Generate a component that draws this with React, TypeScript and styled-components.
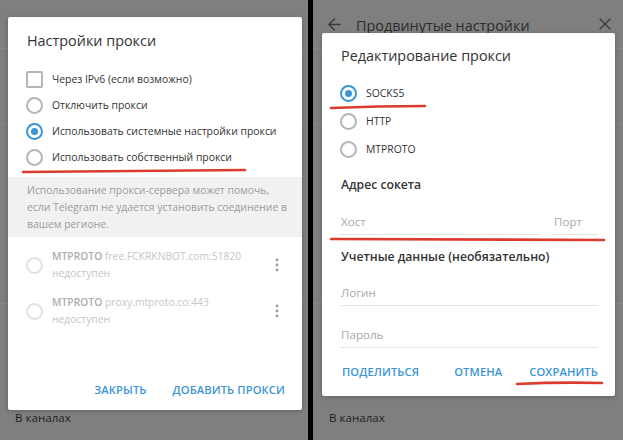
import React from 'react';
import styled, { createGlobalStyle } from 'styled-components';
import { ArrowLeft, X } from 'lucide-react';

const GlobalStyle = createGlobalStyle`
  html, body {
    margin: 0;
    padding: 0;
    background: #000;
  }
  body {
    font-family: "Open Sans", "Noto Sans", sans-serif;
  }
`;

const blue = '#3a95d6';
const red = '#dc3a2f';

const Screen = styled.div`
  display: flex;
  width: 623px;
  height: 440px;
  overflow: hidden;
  background: #000;
`;

const Pane = styled.div<{ $width: number }>`
  position: relative;
  display: flex;
  flex-direction: column;
  width: ${p => p.$width}px;
  height: 100%;
  background: #7f7f7f;
  overflow: hidden;
`;

const Separator = styled.div`
  width: 5px;
  flex-shrink: 0;
  background: #000;
`;

const BackdropSection = styled.div<{ $height: number }>`
  display: flex;
  align-items: center;
  gap: 12px;
  height: ${p => p.$height}px;
  flex-shrink: 0;
  padding: 0 8px 0 12px;
  border-bottom: 1px solid #868686;
  color: #2d2d2d;
  font-size: 14.4px;
`;

const HeaderTitle = styled.div`
  flex: 1;
  padding-top: 2px;
`;

const BackdropLabel = styled.div<{ $left: number }>`
  margin-top: auto;
  padding: 0 0 12px ${p => p.$left}px;
  font-size: 11.6px;
  line-height: 20px;
  color: #1f1f1f;
`;

const Dialog = styled.div<{ $top: number; $left: number; $width: number; $height: number }>`
  position: absolute;
  top: ${p => p.$top}px;
  left: ${p => p.$left}px;
  width: ${p => p.$width}px;
  height: ${p => p.$height}px;
  display: flex;
  flex-direction: column;
  background: #fff;
  border-radius: 2px;
  box-shadow: 0 1px 4px rgba(0, 0, 0, 0.25);
`;

const DialogTitle = styled.div<{ $top: number }>`
  padding: ${p => p.$top}px 18px 0 19px;
  font-size: 14.4px;
  line-height: 20px;
  color: #333;
`;

const OptionList = styled.div<{ $top: number }>`
  display: flex;
  flex-direction: column;
  margin-top: ${p => p.$top}px;
`;

const OptionRow = styled.div<{ $height: number }>`
  display: flex;
  align-items: center;
  gap: 9px;
  height: ${p => p.$height}px;
  padding-left: 18px;
  font-size: 10.4px;
  color: #333;
  white-space: nowrap;
`;

const Radio = styled.span<{ $checked?: boolean; $faded?: boolean }>`
  position: relative;
  width: 17px;
  height: 17px;
  box-sizing: border-box;
  flex-shrink: 0;
  border-radius: 50%;
  border: 2px solid ${p => (p.$checked ? blue : p.$faded ? '#e2e2e2' : '#b5b5b5')};

  &::after {
    content: '';
    display: ${p => (p.$checked ? 'block' : 'none')};
    position: absolute;
    inset: 3px;
    border-radius: 50%;
    background: ${blue};
  }
`;

const Checkbox = styled.span`
  width: 17px;
  height: 17px;
  box-sizing: border-box;
  flex-shrink: 0;
  border-radius: 2px;
  border: 2px solid #b5b5b5;
`;

const InfoBox = styled.div`
  margin-top: 7px;
  padding: 5px 12px 4px 19px;
  background: #f1f1f1;
  font-size: 10.4px;
  line-height: 17px;
  color: #9c9c9c;
  white-space: nowrap;
`;

const ProxyItem = styled.div`
  display: flex;
  align-items: center;
  gap: 9px;
  height: 46px;
  padding: 0 22px 0 18px;
  &:first-child {
    margin-top: 5px;
  }
`;

const ProxyText = styled.div`
  flex: 1;
  font-size: 10.3px;
  line-height: 17px;
  color: #c6c6c6;
  white-space: nowrap;
`;

const ProxyType = styled.span`
  font-weight: 600;
  color: #adadad;
`;

const Spacer = styled.div`
  flex: 1;
`;

const ButtonRow = styled.div<{ $split?: boolean; $bottom: number }>`
  display: flex;
  justify-content: ${p => (p.$split ? 'space-between' : 'flex-end')};
  gap: 26px;
  padding: 0 17px ${p => p.$bottom}px 20px;
`;

const ButtonGroup = styled.div`
  display: flex;
  gap: 27px;
`;

const TextButton = styled.span`
  font-size: 11.2px;
  line-height: 16px;
  font-weight: 600;
  color: ${blue};
  text-transform: uppercase;
  letter-spacing: 0.1px;
`;

const SectionHeading = styled.div<{ $top: number }>`
  margin-top: ${p => p.$top}px;
  padding-left: 19px;
  font-size: 12.2px;
  line-height: 20px;
  font-weight: 600;
  color: #333;
`;

const FieldRow = styled.div<{ $top: number }>`
  display: flex;
  gap: 13px;
  margin-top: ${p => p.$top}px;
  padding: 0 17px 0 18px;
`;

const Field = styled.div<{ $grow?: boolean; $width?: number }>`
  display: flex;
  align-items: flex-end;
  box-sizing: border-box;
  height: 29px;
  padding: 0 0 3px 1px;
  ${p => (p.$grow ? 'flex: 1;' : `width: ${p.$width}px;`)}
  border-bottom: 1px solid #e4e4e4;
  font-size: 11.6px;
  line-height: 18px;
  color: #a8a8a8;
`;

const Marks = styled.svg`
  position: absolute;
  inset: 0;
  width: 100%;
  height: 100%;
  pointer-events: none;
`;

const MoreDots = () => (
  <svg width="6" height="16" viewBox="0 0 6 16">
    <circle cx="3" cy="3" r="1.4" fill="#9d9d9d" />
    <circle cx="3" cy="8" r="1.4" fill="#9d9d9d" />
    <circle cx="3" cy="13" r="1.4" fill="#9d9d9d" />
  </svg>
);

const RedLine = ({ d }: { d: string }) => (
  <path d={d} stroke={red} strokeWidth="2.6" strokeLinecap="round" fill="none" />
);

const proxies = [
  { type: 'MTPROTO', host: 'free.FCKRKNBOT.com:51820' },
  { type: 'MTPROTO', host: 'proxy.mtproto.co:443' },
];

const ProxySettings = () => (
  <Pane $width={308}>
    <BackdropSection $height={48} />
    <BackdropSection $height={74} />
    <BackdropSection $height={179} />
    <BackdropLabel $left={15}>В каналах</BackdropLabel>

    <Dialog $top={17} $left={8} $width={294} $height={393}>
      <DialogTitle $top={14}>Настройки прокси</DialogTitle>
      <OptionList $top={15}>
        <OptionRow $height={26}>
          <Checkbox />
          Через IPv6 (если возможно)
        </OptionRow>
        <OptionRow $height={26}>
          <Radio />
          Отключить прокси
        </OptionRow>
        <OptionRow $height={26}>
          <Radio $checked />
          Использовать системные настройки прокси
        </OptionRow>
        <OptionRow $height={26}>
          <Radio />
          Использовать собственный прокси
        </OptionRow>
      </OptionList>
      <InfoBox>
        Использование прокси-сервера может помочь,
        <br />
        если Telegram не удается установить соединение в
        <br />
        вашем регионе.
      </InfoBox>
      <div>
        {proxies.map(p => (
          <ProxyItem key={p.host}>
            <Radio $faded />
            <ProxyText>
              <ProxyType>{p.type}</ProxyType> {p.host}
              <br />
              недоступен
            </ProxyText>
            <MoreDots />
          </ProxyItem>
        ))}
      </div>
      <Spacer />
      <ButtonRow $bottom={12}>
        <TextButton>Закрыть</TextButton>
        <TextButton>Добавить прокси</TextButton>
      </ButtonRow>
    </Dialog>

    <Marks>
      <RedLine d="M23 172 Q130 171 245 170" />
    </Marks>
  </Pane>
);

const EditProxy = () => (
  <Pane $width={310}>
    <BackdropSection $height={48}>
      <ArrowLeft size={19} strokeWidth={1.6} color="#3a3a3a" />
      <HeaderTitle>Продвинутые настройки</HeaderTitle>
      <X size={20} strokeWidth={1.5} color="#3a3a3a" />
    </BackdropSection>
    <BackdropSection $height={74} />
    <BackdropSection $height={179} />
    <BackdropLabel $left={16}>В каналах</BackdropLabel>

    <Dialog $top={33} $left={9} $width={293} $height={363}>
      <DialogTitle $top={13}>Редактирование прокси</DialogTitle>
      <OptionList $top={13}>
        <OptionRow $height={28}>
          <Radio $checked />
          SOCKS5
        </OptionRow>
        <OptionRow $height={28}>
          <Radio />
          HTTP
        </OptionRow>
        <OptionRow $height={28}>
          <Radio />
          MTPROTO
        </OptionRow>
      </OptionList>
      <SectionHeading $top={12}>Адрес сокета</SectionHeading>
      <FieldRow $top={11}>
        <Field $grow>Хост</Field>
        <Field $width={45}>Порт</Field>
      </FieldRow>
      <SectionHeading $top={12}>Учетные данные (необязательно)</SectionHeading>
      <FieldRow $top={10}>
        <Field $grow>Логин</Field>
      </FieldRow>
      <FieldRow $top={13}>
        <Field $grow>Пароль</Field>
      </FieldRow>
      <Spacer />
      <ButtonRow $split $bottom={16}>
        <TextButton>Поделиться</TextButton>
        <ButtonGroup>
          <TextButton>Отмена</TextButton>
          <TextButton>Сохранить</TextButton>
        </ButtonGroup>
      </ButtonRow>
    </Dialog>

    <Marks>
      <RedLine d="M18 108 Q65 106 112 106" />
      <RedLine d="M18 239 Q150 240 291 240" />
      <RedLine d="M204 384 Q246 382 289 383" />
    </Marks>
  </Pane>
);

const App = () => (
  <>
    <GlobalStyle />
    <Screen>
      <ProxySettings />
      <Separator />
      <EditProxy />
    </Screen>
  </>
);

export default App;
